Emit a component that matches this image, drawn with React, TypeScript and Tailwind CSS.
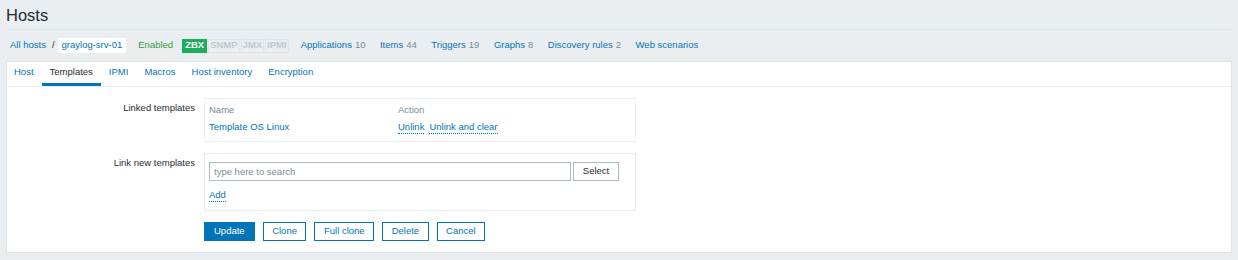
import React from 'react';

const navLinks = [
  { label: 'Applications', count: '10' },
  { label: 'Items', count: '44' },
  { label: 'Triggers', count: '19' },
  { label: 'Graphs', count: '8' },
  { label: 'Discovery rules', count: '2' },
  { label: 'Web scenarios', count: '' },
];

const tabs = ['Host', 'Templates', 'IPMI', 'Macros', 'Host inventory', 'Encryption'];

const buttons = ['Clone', 'Full clone', 'Delete', 'Cancel'];

const App = () => {
  return (
    <div
      className="min-h-screen bg-[#ebeef0] text-[9.5px] text-[#1f2c33]"
      style={{ fontFamily: '"Liberation Sans", Arial, sans-serif' }}
    >
      {/* Page header */}
      <div className="mx-[6px] flex h-[30px] items-center border-b border-[#dfe4e7]">
        <h1 className="text-[16.5px] leading-[20px] font-normal">Hosts</h1>
      </div>

      {/* Host navigation */}
      <div className="flex h-[31px] items-center pl-[10px]">
        <a className="text-[#0275b8]">All hosts</a>
        <span className="ml-[6px] text-[#1f2c33]">/</span>
        <span className="ml-[3px] flex h-[15px] items-center bg-white px-[4px] text-[#0275b8]">graylog-srv-01</span>
        <span className="ml-[12px] text-[#3a9a40]">Enabled</span>
        <div className="ml-[9px] flex gap-[1px] font-bold">
          <span className="flex h-[14px] items-center border border-[#1aaf5d] bg-[#1aaf5d] px-[2px] text-white">ZBX</span>
          <span className="flex h-[14px] items-center border border-[#dfe4e7] px-[1px] text-[#bfc9ce]">SNMP</span>
          <span className="flex h-[14px] items-center border border-[#dfe4e7] px-[1px] text-[#bfc9ce]">JMX</span>
          <span className="flex h-[14px] items-center border border-[#dfe4e7] px-[1px] text-[#bfc9ce]">IPMI</span>
        </div>
        <div className="ml-[12px] flex gap-[14.5px]">
          {navLinks.map(link => (
            <span key={link.label}>
              <a className="text-[#0275b8]">{link.label}</a>
              {link.count && <span className="ml-[3px] text-[#768d99]">{link.count}</span>}
            </span>
          ))}
        </div>
      </div>

      {/* Main panel */}
      <div className="mx-[6px] border border-[#dfe4e7] bg-white">
        {/* Tabs */}
        <div className="flex h-[25px] border-b border-[#ebeef0]">
          {tabs.map(tab =>
            tab === 'Templates' ? (
              <div key={tab} className="flex h-full items-center border-b-[3px] border-[#0275b8] px-[8px] text-[#1f2c33]">
                {tab}
              </div>
            ) : (
              <div key={tab} className="flex h-full items-center px-[8px] pb-[3px] text-[#0275b8] first:pl-[7px]">
                {tab}
              </div>
            )
          )}
        </div>

        {/* Form */}
        <div className="flex flex-col pt-[11px] pb-[11px]">
          {/* Linked templates */}
          <div className="flex">
            <div className="w-[188px] pt-[3px] text-right leading-[14px]">Linked templates</div>
            <div className="ml-[9px] w-[432px] border border-[#ebeef0] px-[4px] pt-[3px] pb-[5px]">
              <div className="flex h-[17px] items-center text-[#768d99]">
                <span className="w-[189px]">Name</span>
                <span>Action</span>
              </div>
              <div className="flex h-[17px] items-center">
                <a className="w-[189px] text-[#0275b8]">Template OS Linux</a>
                <a className="border-b border-dotted border-[#0275b8] leading-[12px] text-[#0275b8]">Unlink</a>
                <a className="ml-[5px] border-b border-dotted border-[#0275b8] leading-[12px] text-[#0275b8]">Unlink and clear</a>
              </div>
            </div>
          </div>

          {/* Link new templates */}
          <div className="mt-[11px] flex">
            <div className="w-[188px] pt-[3px] text-right leading-[14px]">Link new templates</div>
            <div className="ml-[9px] w-[432px] border border-[#ebeef0] px-[4px] pt-[8px] pb-[8px]">
              <div className="flex h-[19px]">
                <input
                  className="h-[19px] w-[362px] border border-[#acbbc2] px-[4px] text-[9.5px] text-[#1f2c33] outline-none placeholder:text-[#768d99]"
                  placeholder="type here to search"
                />
                <button className="ml-[2px] h-[19px] w-[46px] border border-[#acbbc2] bg-white text-[#1f2c33]">Select</button>
              </div>
              <div className="mt-[7px] flex h-[14px] items-start">
                <a className="border-b border-dotted border-[#0275b8] leading-[13px] text-[#0275b8]">Add</a>
              </div>
            </div>
          </div>

          {/* Buttons */}
          <div className="mt-[11px] ml-[197px] flex gap-[8px]">
            <button className="h-[19px] border border-[#0275b8] bg-[#0275b8] px-[9px] text-white">Update</button>
            {buttons.map(label => (
              <button key={label} className="h-[19px] border border-[#0275b8] bg-white px-[8.5px] text-[#0275b8]">
                {label}
              </button>
            ))}
          </div>
        </div>
      </div>
    </div>
  );
};

export default App;
